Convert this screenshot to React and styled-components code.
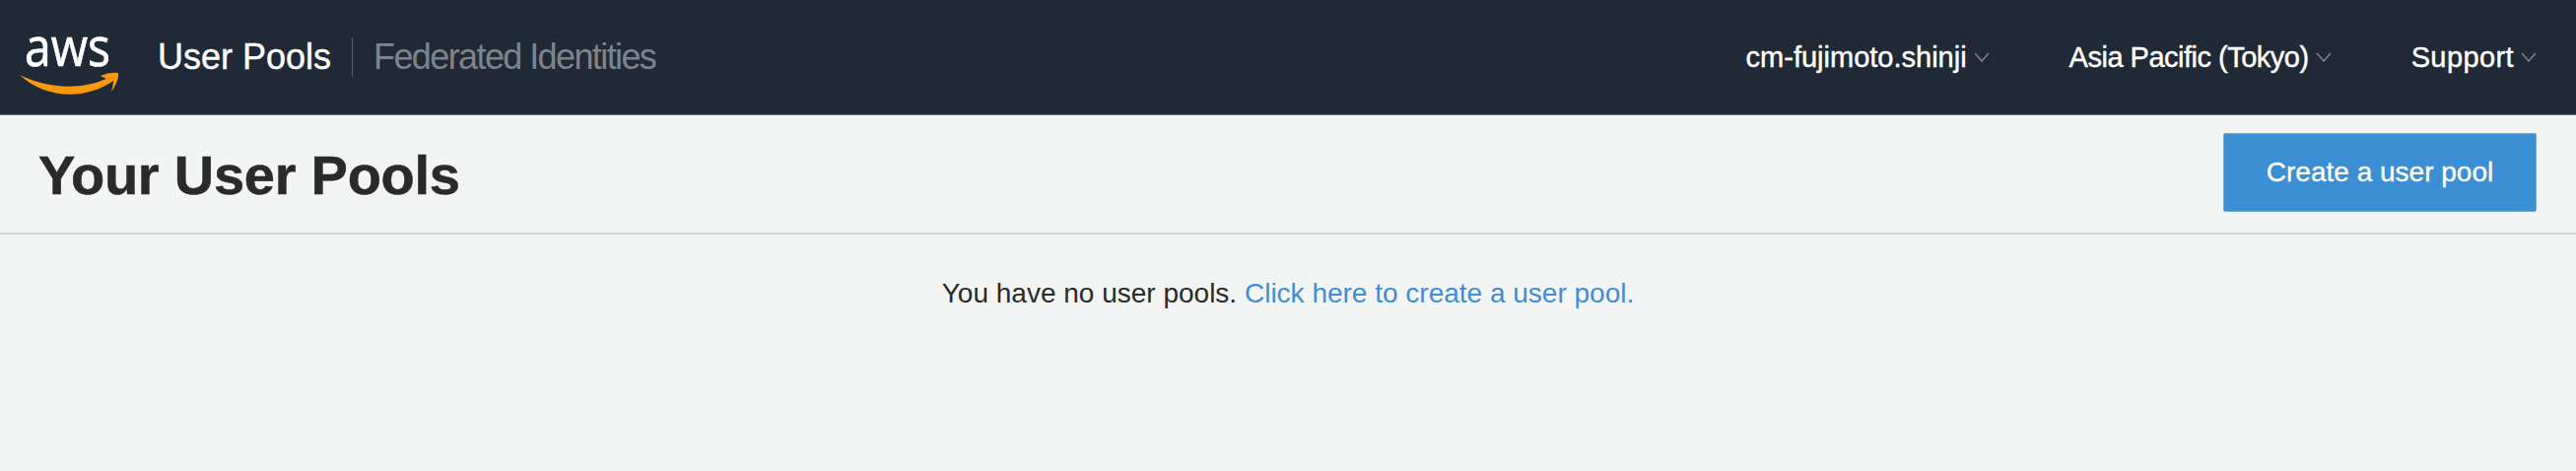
import React from 'react';
import styled, { createGlobalStyle } from 'styled-components';

const GlobalStyle = createGlobalStyle`
  html, body {
    margin: 0;
    height: 100%;
    background: #f3f5f4;
    font-family: "Liberation Sans", Arial, sans-serif;
  }
`;

function AwsLogo() {
  return (
    <LogoMark viewBox="0 0 102 62" width="102" height="62">
      <text
        x="5"
        y="34"
        fill="#ffffff"
        stroke="#ffffff"
        strokeWidth="0.7"
        fontFamily="'Open Sans', sans-serif"
        fontSize="55"
        textLength="87"
        lengthAdjust="spacingAndGlyphs"
      >
        aws
      </text>
      <path
        d="M0 43 C 24 55, 58 60, 88 47 L 82 44 C 88 41, 96 40, 100 41 C 101 46, 97 55, 93 60 C 94 56, 95 52, 95 49 C 65 70, 24 66, 0 43 Z"
        fill="#f7980f"
      />
    </LogoMark>
  );
}

function Chevron() {
  return (
    <ChevronIcon viewBox="0 0 16 10" width="16" height="10">
      <path d="M1 1 L8 9 L15 1" fill="none" stroke="#7f8791" strokeWidth="1.4" />
    </ChevronIcon>
  );
}

function NavMenu({ label, spacing = 0 }) {
  return (
    <MenuItem $spacing={spacing}>
      <span>{label}</span>
      <Chevron />
    </MenuItem>
  );
}

export default function App() {
  return (
    <>
      <GlobalStyle />
      <TopBar>
        <AwsLogo />
        <Tabs>
          <ActiveTab>User Pools</ActiveTab>
          <Divider />
          <MutedTab>Federated Identities</MutedTab>
        </Tabs>
        <Menus>
          <NavMenu label="cm-fujimoto.shinji" />
          <NavMenu label="Asia Pacific (Tokyo)" spacing={-0.5} />
          <NavMenu label="Support" spacing={0.4} />
        </Menus>
      </TopBar>

      <PageHeader>
        <Title>Your User Pools</Title>
        <PrimaryButton>Create a user pool</PrimaryButton>
      </PageHeader>

      <EmptyState>
        You have no user pools.{' '}
        <EmptyLink href="#">Click here to create a user pool.</EmptyLink>
      </EmptyState>
    </>
  );
}

const TopBar = styled.nav`
  display: flex;
  align-items: center;
  box-sizing: border-box;
  height: 117px;
  padding: 0 40px 0 20px;
  background: #202a37;
  border-bottom: 1px solid #6d747c;
`;

const LogoMark = styled.svg`
  display: block;
  flex: none;
  margin-top: 12px;
  overflow: visible;
`;

const Tabs = styled.div`
  display: flex;
  align-items: center;
  margin-left: 38px;
`;

const ActiveTab = styled.span`
  color: #ffffff;
  font-size: 36px;
  -webkit-text-stroke: 0.4px #ffffff;
`;

const MutedTab = styled.span`
  color: #7d848c;
  font-size: 36px;
  letter-spacing: -1.6px;
`;

const Divider = styled.span`
  width: 1px;
  height: 40px;
  margin: 0 21px;
  background: #56606b;
`;

const Menus = styled.div`
  display: flex;
  align-items: center;
  gap: 81px;
  margin-left: auto;
`;

const MenuItem = styled.div`
  display: flex;
  align-items: center;
  gap: 7px;
  color: #ffffff;
  font-size: 29px;
  letter-spacing: ${(props) => props.$spacing}px;
  -webkit-text-stroke: 0.4px #ffffff;
`;

const ChevronIcon = styled.svg`
  display: block;
  flex: none;
`;

const PageHeader = styled.header`
  display: flex;
  align-items: center;
  justify-content: space-between;
  box-sizing: border-box;
  height: 121px;
  padding: 0 40px 3px 39px;
  border-bottom: 2px solid #d3d5d5;
`;

const Title = styled.h1`
  margin: 4px 0 0;
  color: #2a2a2a;
  font-size: 56px;
  font-weight: 700;
  letter-spacing: -0.25px;
  -webkit-text-stroke: 0.5px #2a2a2a;
`;

const PrimaryButton = styled.button`
  width: 318px;
  height: 80px;
  padding: 0;
  border: 1px solid #6aa9dd;
  border-radius: 2px;
  background: #3c8fd3;
  color: #ffffff;
  font-family: inherit;
  font-size: 28px;
  -webkit-text-stroke: 0.3px #ffffff;
`;

const EmptyState = styled.p`
  margin: 0;
  padding-top: 43px;
  color: #2a2a2a;
  font-size: 28px;
  line-height: 34px;
  text-align: center;
`;

const EmptyLink = styled.a`
  color: #3f8dd4;
  text-decoration: none;
`;
